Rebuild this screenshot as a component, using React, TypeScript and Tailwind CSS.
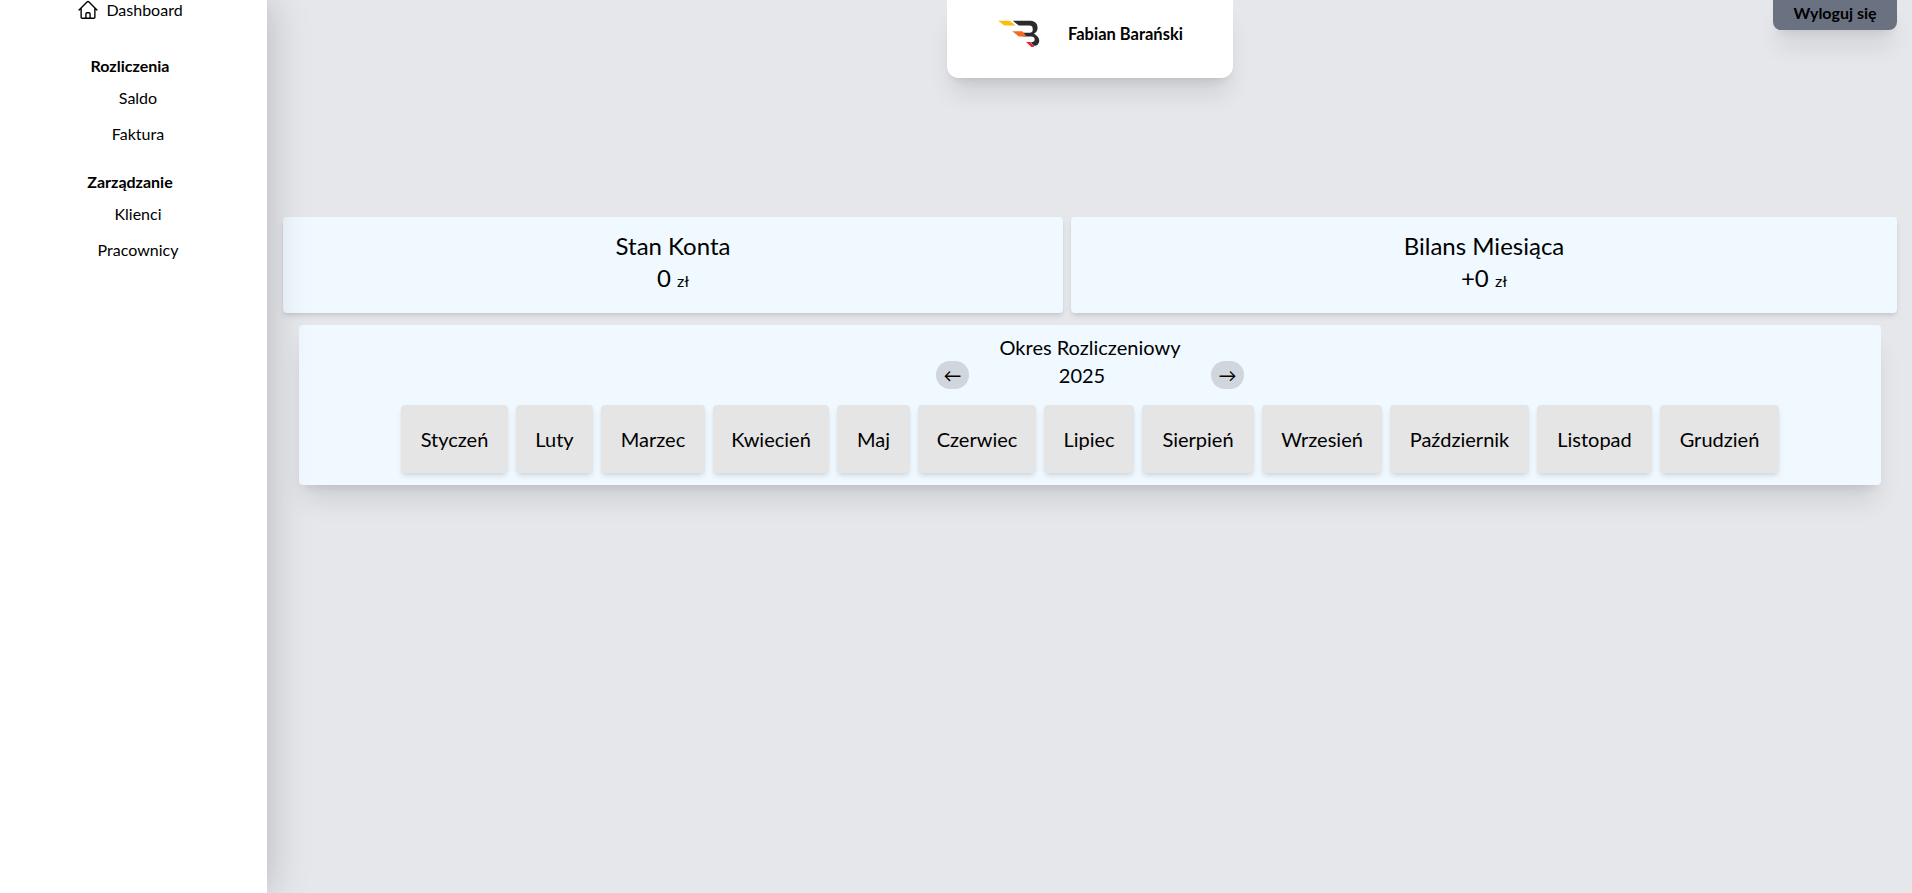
const months = [
  { name: "Styczeń", width: "w-[107px]" },
  { name: "Luty", width: "w-[77px]" },
  { name: "Marzec", width: "w-[104px]" },
  { name: "Kwiecień", width: "w-[116px]" },
  { name: "Maj", width: "w-[73px]" },
  { name: "Czerwiec", width: "w-[118px]" },
  { name: "Lipiec", width: "w-[90px]" },
  { name: "Sierpień", width: "w-[112px]" },
  { name: "Wrzesień", width: "w-[120px]" },
  { name: "Październik", width: "w-[139px]" },
  { name: "Listopad", width: "w-[115px]" },
  { name: "Grudzień", width: "w-[119px]" },
];

const HomeIcon = () => (
  <svg viewBox="0 0 24 24" fill="none" stroke="currentColor" strokeWidth={1.5} strokeLinecap="round" strokeLinejoin="round" className="h-[22px] w-[22px]">
    <path d="m2.25 12 8.954-8.955c.44-.439 1.152-.439 1.591 0L21.75 12M4.5 9.75v10.125c0 .621.504 1.125 1.125 1.125H9.75v-4.875c0-.621.504-1.125 1.125-1.125h2.25c.621 0 1.125.504 1.125 1.125V21h4.125c.621 0 1.125-.504 1.125-1.125V9.75M8.25 21h8.25" />
  </svg>
);

const Logo = () => (
  <svg viewBox="205 58 130 85" className="h-[28px] w-[43px]">
    <path d="M205 60H240L258 75H224Z" fill="#fbbf0f" />
    <path d="M250 60H305Q325 62 325 82Q325 92 314 100Q330 108 330 122Q328 138 312 136L305 125Q316 125 316 118Q316 108 305 108H282L272 97H302Q312 95 310 85Q310 75 300 75H268Z" fill="#2b2b2d" />
    <path d="M248 92H278L292 108H268Z" fill="#f26b21" />
    <path d="M290 125H303L315 140H306Z" fill="#e8202a" />
  </svg>
);

const Stat = ({ title, value, className }: { title: string; value: string; className: string }) => (
  <div className={`rounded bg-sky-50 pt-[13px] pb-[19px] text-center text-2xl shadow-md ${className}`}>
    <h2>{title}</h2>
    <p>
      {value} <span className="text-base">zł</span>
    </p>
  </div>
);

const App = () => {
  return (
    <div className="flex h-screen overflow-hidden bg-gray-200 font-['Lato',sans-serif] text-black">
      {/* Sidebar */}
      <aside className="z-10 flex w-[267px] shrink-0 flex-col items-center bg-white pr-[7px] text-base leading-5 shadow-[0_0_40px_rgba(0,0,0,0.22)]">
        <a className="flex h-5 items-center gap-[7px]">
          <HomeIcon />
          Dashboard
        </a>
        <h3 className="mt-9 font-bold">Rozliczenia</h3>
        <ul className="mt-1 flex flex-col items-center pl-4">
          <li className="py-2">Saldo</li>
          <li className="py-2">Faktura</li>
        </ul>
        <h3 className="mt-5 font-bold">Zarządzanie</h3>
        <ul className="mt-1 flex flex-col items-center pl-4">
          <li className="py-2">Klienci</li>
          <li className="py-2">Pracownicy</li>
        </ul>
      </aside>

      <main className="flex min-w-0 flex-1 flex-col pl-4 pr-[15px]">
        {/* Header */}
        <header className="grid h-[78px] shrink-0 grid-cols-[1fr_286px_1fr] items-start">
          <div />
          <div className="flex h-[78px] items-center rounded-b-xl bg-white pb-[10px] pl-[51px] shadow-xl">
            <Logo />
            <span className="ml-[27px] text-[16.5px] font-bold">Fabian Barański</span>
          </div>
          <button className="w-[124px] justify-self-end rounded-b-lg bg-gray-500 pb-1 text-base leading-[26px] font-bold shadow-xl">
            Wyloguj się
          </button>
        </header>

        <div className="mt-[139px] flex gap-2">
          <Stat title="Stan Konta" value="0" className="w-[780px]" />
          <Stat title="Bilans Miesiąca" value="+0" className="flex-1" />
        </div>

        {/* Billing period */}
        <section className="mx-4 mt-3 rounded bg-sky-50 pt-2 pb-3 text-center text-xl leading-7 shadow-xl">
          <h2>Okres Rozliczeniowy</h2>
          <div className="flex items-center justify-center">
            <button className="h-7 w-[33px] rounded-full bg-gray-300 text-lg">←</button>
            <span className="w-[242px] pr-4">2025</span>
            <button className="h-7 w-[33px] rounded-full bg-gray-300 text-lg">→</button>
          </div>
          <div className="mt-4 flex justify-center gap-2">
            {months.map((m) => (
              <button key={m.name} className={`rounded-sm bg-[#e5e5e5] py-5 shadow-md ${m.width}`}>
                {m.name}
              </button>
            ))}
          </div>
        </section>
      </main>
    </div>
  );
};

export default App;
